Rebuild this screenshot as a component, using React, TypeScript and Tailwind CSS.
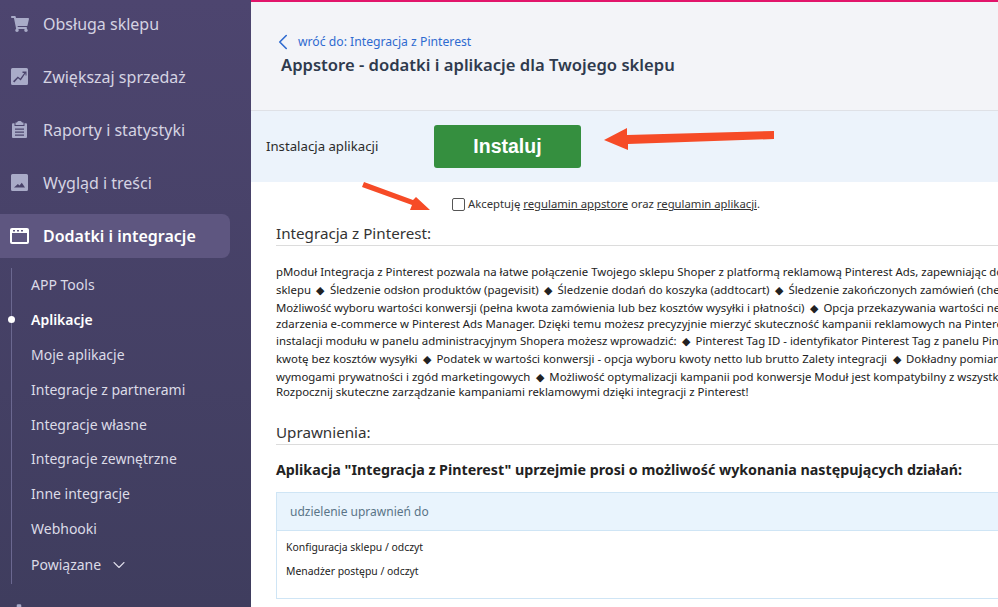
import { Fragment } from "react";
import { ChevronDown, ChevronLeft } from "lucide-react";
import { FaCog, FaShoppingCart } from "react-icons/fa";

function ChartIcon() {
  return (
    <svg width="17" height="17" viewBox="0 0 17 17" fill="#a9abc8">
      <path
        fillRule="evenodd"
        d="M1.500 0h14A1.500 1.500 0 0 1 17 1.500v14a1.500 1.500 0 0 1-1.500 1.500h-14A1.500 1.500 0 0 1 0 15.500v-14A1.500 1.500 0 0 1 1.500 0zM2 13.200l1.300 1.300 3.700-4.300 2.700 2.300 4.800-7.200V7.500H15.500V3.500h-4v1.400h1.800L9.300 10.600 6.800 8.400 2 13.200z"
      />
    </svg>
  );
}

function ClipboardIcon() {
  return (
    <svg width="15" height="17" viewBox="0 0 15 17" fill="#a9abc8">
      <path
        fillRule="evenodd"
        d="M5 1.500C5 .7 6 0 7.500 0S10 .7 10 1.500h1.500V4h-8V1.500H5zM1 2.200h1.500V5h10V2.200H14a1 1 0 0 1 1 1V16a1 1 0 0 1-1 1H1a1 1 0 0 1-1-1V3.200a1 1 0 0 1 1-1zM3 7.500v1.300h9V7.500H3zm0 3v1.300h9v-1.300H3zm0 3v1.300h9v-1.300H3z"
      />
    </svg>
  );
}

function ImageIcon() {
  return (
    <svg width="17" height="17" viewBox="0 0 17 17" fill="#a9abc8">
      <path
        fillRule="evenodd"
        d="M1.500 0h14A1.500 1.500 0 0 1 17 1.500v14a1.500 1.500 0 0 1-1.500 1.500h-14A1.500 1.500 0 0 1 0 15.500v-14A1.500 1.500 0 0 1 1.500 0zM3 13.500h11l-3.200-4.700-2.300 2.700-1.600-1.500L3 13.500z"
      />
    </svg>
  );
}

const mainItems = [
  { label: "Obsługa sklepu", icon: <FaShoppingCart size={18} />, cls: "h-[50px] pb-[2px]" },
  { label: "Zwiększaj sprzedaż", icon: <ChartIcon />, cls: "h-[53px]" },
  { label: "Raporty i statystyki", icon: <ClipboardIcon />, cls: "h-[53px]" },
  { label: "Wygląd i treści", icon: <ImageIcon />, cls: "h-[53px]" },
];

const subItems = [
  "APP Tools",
  "Aplikacje",
  "Moje aplikacje",
  "Integracje z partnerami",
  "Integracje własne",
  "Integracje zewnętrzne",
  "Inne integracje",
  "Webhooki",
];

// line boxes differ in the reference: the diamond glyph pushes its lines apart
const description = [
  { text: "pModuł Integracja z Pinterest pozwala na łatwe połączenie Twojego sklepu Shoper z platformą reklamową Pinterest Ads, zapewniając dokładne śledzenie", cls: "h-[16px] leading-[16px]" },
  { text: "sklepu ◆ Śledzenie odsłon produktów (pagevisit) ◆ Śledzenie dodań do koszyka (addtocart) ◆ Śledzenie zakończonych zamówień (checkout) ◆ Konwersje", cls: "h-[19px] leading-[19px]" },
  { text: "Możliwość wyboru wartości konwersji (pełna kwota zamówienia lub bez kosztów wysyłki i płatności) ◆ Opcja przekazywania wartości netto lub brutto", cls: "h-[17px] leading-[17px]" },
  { text: "zdarzenia e-commerce w Pinterest Ads Manager. Dzięki temu możesz precyzyjnie mierzyć skuteczność kampanii reklamowych na Pinterest oraz", cls: "h-[15px] leading-[15px]" },
  { text: "instalacji modułu w panelu administracyjnym Shopera możesz wprowadzić: ◆ Pinterest Tag ID - identyfikator Pinterest Tag z panelu Pinterest Ads", cls: "h-[19px] leading-[19px]" },
  { text: "kwotę bez kosztów wysyłki ◆ Podatek w wartości konwersji - opcja wyboru kwoty netto lub brutto Zalety integracji ◆ Dokładny pomiar konwersji", cls: "h-[17px] leading-[17px]" },
  { text: "wymogami prywatności i zgód marketingowych ◆ Możliwość optymalizacji kampanii pod konwersje Moduł jest kompatybilny z wszystkimi szablonami", cls: "h-[19px] leading-[19px]" },
  { text: "Rozpocznij skuteczne zarządzanie kampaniami reklamowymi dzięki integracji z Pinterest!", cls: "h-[11px] leading-[11px]" },
];

export default function App() {
  return (
    <div className="flex h-[607px] w-[998px] overflow-hidden bg-white font-['Noto_Sans',sans-serif]">
      <aside className="h-full w-[251px] shrink-0 overflow-hidden bg-gradient-to-b from-[#4d456f] to-[#3f3d5e] pr-[21px]">
        <nav className="flex flex-col text-[16px] text-[#d5d3e2]">
          {mainItems.map((item) => (
            <div key={item.label} className={"flex items-center gap-[14px] pl-[10px] " + item.cls}>
              <span className="flex w-[19px] justify-center text-[#a9abc8]">{item.icon}</span>
              <span>{item.label}</span>
            </div>
          ))}
          <div className="mt-[5px] flex h-11 items-center gap-[14px] rounded-r-lg bg-[#5e5680] pl-[10px] font-semibold text-white">
            <svg width="19" height="16" viewBox="0 0 19 16" fill="white">
              <path d="M2 0h15a2 2 0 0 1 2 2v12a2 2 0 0 1-2 2H2a2 2 0 0 1-2-2V2a2 2 0 0 1 2-2zm0 5v9h15V5H2zm1-3v1.500h2V2H3zm4 0v1.500h2V2H7zm4 0v1.500h2V2h-2z" fillRule="evenodd" />
            </svg>
            <span>Dodatki i integracje</span>
          </div>
        </nav>
        <div className="ml-[11px] mt-[9.500px] flex flex-col border-l border-[#6b6890] pl-[19px] text-[14px] text-[#dcdbe7]">
          {subItems.map((item) => (
            <div key={item} className={"relative flex h-[34.800px] items-center " + (item === "Aplikacje" ? "font-semibold text-white" : "")}>
              {item === "Aplikacje" && <span className="absolute -left-[23px] top-[14px] h-[7px] w-[7px] rounded-full bg-white" />}
              {item}
            </div>
          ))}
          <div className="flex h-[38px] items-center gap-[8px]">
            Powiązane <ChevronDown size={20} strokeWidth={1.300} />
          </div>
        </div>
        <div className="mt-[17px] flex items-center gap-[14px] pl-[10px] text-[16px] text-[#d5d3e2]">
          <FaCog size={18} className="text-[#a9abc8]" />
          <span>Ustawienia</span>
        </div>
      </aside>

      <main className="min-w-0 flex-1 overflow-hidden">
        <div className="h-[2px] bg-[#e2156b]" />
        <header className="h-[109px] border-b border-[#dfe1e6] bg-[#f3f4f8] pl-[27px] pt-[31px]">
          <a className="flex items-center gap-[2px] text-[12.200px] text-[#2f6bd0]">
            <ChevronLeft size={26} strokeWidth={1.500} className="-my-[6px] -ml-[8px]" />
            wróć do: Integracja z Pinterest
          </a>
          <h1 className="mt-[2px] pl-[3px] text-[16.600px] font-semibold whitespace-nowrap text-[#2f3a4d]">
            Appstore - dodatki i aplikacje dla Twojego sklepu
          </h1>
        </header>
        <section className="relative flex h-[71px] items-center bg-[#ecf3fb] pl-[15px]">
          <span className="w-[168px] text-[13.200px] text-[#2b2b2b]">Instalacja aplikacji</span>
          <button className="h-[43px] w-[147px] rounded-[3px] bg-[#358f3f] font-['Liberation_Sans',sans-serif] text-[19.500px] font-bold text-white">
            Instaluj
          </button>
          <svg className="absolute left-[353px] top-[17px]" width="172" height="24" viewBox="0 0 172 24" fill="#f64b27">
            <path d="M0 12 L23 0 L23 7 L170 3 L170 11 L24 16 L24 22 Z" />
          </svg>
        </section>
        <div className="relative pl-[25px]">
          <svg className="absolute left-[110px] top-0" width="72" height="32" viewBox="0 0 72 32" fill="#f64b27">
            <path d="M3 0 L52 18 L55 15 L69 28 L49 28 L51 23 L1 5 Z" />
          </svg>
          <label className="flex h-[41px] items-center pl-[176px] pt-[4px] text-[11.300px] text-[#333]">
            <span className="mr-[3px] h-[13px] w-[13px] shrink-0 rounded-[2px] border border-[#555] bg-white" />
            <span className="whitespace-nowrap">
              Akceptuję <u>regulamin appstore</u> oraz <u>regulamin aplikacji</u>.
            </span>
          </label>
          <h2 className="border-b border-[#dcdcdc] pb-[2px] text-[15.200px] leading-[20px] whitespace-nowrap text-[#333]">
            Integracja z Pinterest:
          </h2>
          <div className="mt-[17.500px] text-[11.400px] whitespace-nowrap text-[#222]">
            {description.map((line) => (
              <p key={line.text} className={line.cls}>
                {line.text.split("◆").map((part, i) => (
                  <Fragment key={i}>
                    {i > 0 && <span className="mx-[2.500px]">◆</span>}
                    {part}
                  </Fragment>
                ))}
              </p>
            ))}
          </div>
          <h2 className="mt-[25.500px] border-b border-[#dcdcdc] pb-[2px] text-[15.200px] leading-[20px] text-[#333]">
            Uprawnienia:
          </h2>
          <p className="mt-[15px] text-[14.250px] leading-[20px] font-bold whitespace-nowrap text-[#222]">
            Aplikacja "Integracja z Pinterest" uprzejmie prosi o możliwość wykonania następujących działań:
          </p>
          <div className="mt-[12px] border border-r-0 border-[#cfe5f5]">
            <div className="flex h-[38px] items-center border-b border-[#cfe5f5] bg-[#e9f4fd] pl-[13px] text-[12px] text-[#5a7488]">
              udzielenie uprawnień do
            </div>
            <div className="h-[67px] pl-[9px] pt-[4px] text-[10.400px] text-[#222]">
              <p className="h-[24px] leading-[24px]">Konfiguracja sklepu / odczyt</p>
              <p className="h-[24px] leading-[24px]">Menadżer postępu / odczyt</p>
            </div>
          </div>
        </div>
      </main>
    </div>
  );
}
